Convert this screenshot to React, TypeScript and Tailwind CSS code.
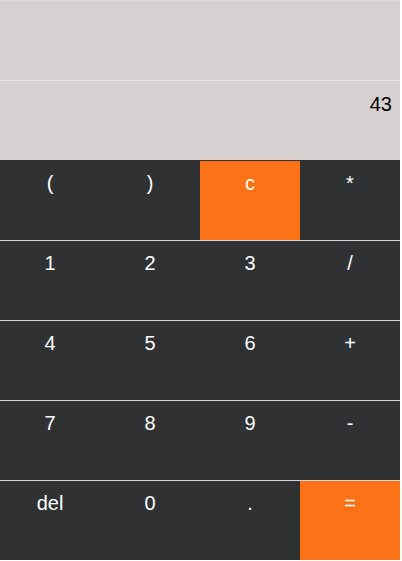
const rows: string[][] = [
  ["(", ")", "c", "*"],
  ["1", "2", "3", "/"],
  ["4", "5", "6", "+"],
  ["7", "8", "9", "-"],
  ["del", "0", ".", "="],
];

const orange = new Set(["c", "="]);

export default function App() {
  return (
    <div className="w-[400px] font-['Liberation_Sans',Arial,sans-serif]">
      <div className="bg-[#d7d0d0]">
        <div className="h-[80px] border-t border-[#ddd6d6]" />
        <div className="h-[80px] border-t border-[#ebe5e5] pt-[12px] pr-[8px] text-right text-[20px] leading-[23px] text-black">
          43
        </div>
      </div>
      <div className="bg-[#2f3133]">
        {rows.map((row, i) => (
          <div
            key={i}
            className={
              "grid grid-cols-4 border-t " +
              (i === 0 ? "border-[#2f3133]" : "border-[#d4d4d4]")
            }
          >
            {row.map((k) => (
              <button
                key={k}
                className={
                  "h-[79px] pt-[11px] text-center text-[20px] leading-[23px] text-white flex justify-center items-start " +
                  (orange.has(k) ? "bg-[#fc7216]" : "bg-[#2f3133]")
                }
              >
                {k}
              </button>
            ))}
          </div>
        ))}
      </div>
    </div>
  );
}
